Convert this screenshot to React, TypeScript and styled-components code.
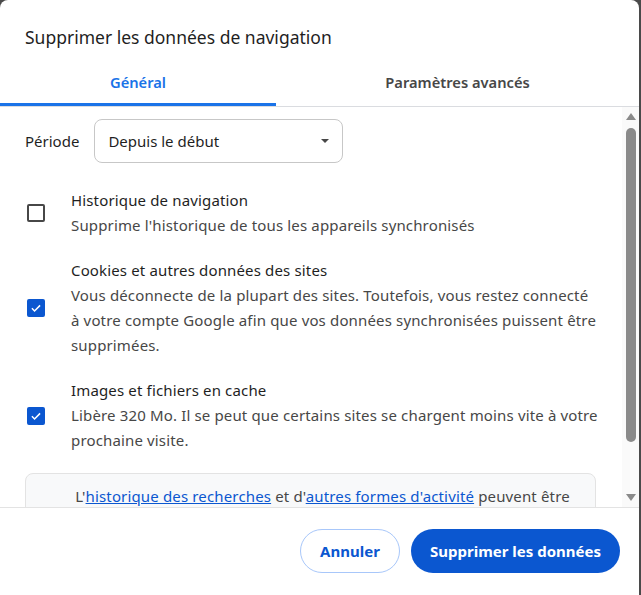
import React from "react";
import styled, { createGlobalStyle } from "styled-components";

const GlobalStyle = createGlobalStyle`
  html, body {
    margin: 0;
    padding: 0;
    background: #4a4a4a;
  }
  body {
    font-family: "Noto Sans", "Open Sans", sans-serif;
  }
`;

type Item = {
  title: string;
  lines: string;
  checked: boolean;
};

const items: Item[] = [
  {
    title: "Historique de navigation",
    lines: "Supprime l'historique de tous les appareils synchronisés",
    checked: false,
  },
  {
    title: "Cookies et autres données des sites",
    lines:
      "Vous déconnecte de la plupart des sites. Toutefois, vous restez connecté à votre compte Google afin que vos données synchronisées puissent être supprimées.",
    checked: true,
  },
  {
    title: "Images et fichiers en cache",
    lines:
      "Libère 320 Mo. Il se peut que certains sites se chargent moins vite à votre prochaine visite.",
    checked: true,
  },
];

const App: React.FC = () => {
  return (
    <>
      <GlobalStyle />
      <Dialog>
        <Title>Supprimer les données de navigation</Title>
        <Tabs>
          <Tab $active $width="276px">Général</Tab>
          <Tab>Paramètres avancés</Tab>
        </Tabs>
        <Body>
          <Content>
            <PeriodRow>
              <PeriodLabel>Période</PeriodLabel>
              <Select>
                <span>Depuis le début</span>
                <Caret />
              </Select>
            </PeriodRow>
            {items.map((item) => (
              <CheckRow key={item.title}>
                <CheckBox $checked={item.checked}>
                  {item.checked && (
                    <svg width="14" height="14" viewBox="0 0 24 24">
                      <path
                        d="M5 12.5l4.5 4.5L19 7.5"
                        fill="none"
                        stroke="#fff"
                        strokeWidth="2.6"
                      />
                    </svg>
                  )}
                </CheckBox>
                <CheckText>
                  <ItemTitle>{item.title}</ItemTitle>
                  <ItemSub>{item.lines}</ItemSub>
                </CheckText>
              </CheckRow>
            ))}
            <InfoBox>
              L'<Link>historique des recherches</Link> et d'
              <Link>autres formes d'activité</Link> peuvent être supprimés de
              votre compte Google à tout moment.
            </InfoBox>
          </Content>
          <ScrollBar>
            <Arrow $dir="up" />
            <Thumb />
            <Arrow $dir="down" />
          </ScrollBar>
        </Body>
        <Footer>
          <OutlineButton>Annuler</OutlineButton>
          <PrimaryButton>Supprimer les données</PrimaryButton>
        </Footer>
      </Dialog>
    </>
  );
};

export default App;

const Dialog = styled.div`
  width: 639px;
  height: 595px;
  background: #ffffff;
  border-radius: 8px 8px 0 0;
  display: flex;
  flex-direction: column;
  overflow: hidden;
  color: #1f1f1f;
`;

const Title = styled.div`
  padding: 24px 25px 0;
  height: 34px;
  font-size: 17.5px;
  line-height: 26px;
  color: #1f1f1f;
`;

const Tabs = styled.div`
  display: flex;
  height: 48px;
  border-bottom: 1px solid #dadce0;
`;

const Tab = styled.div<{ $active?: boolean; $width?: string }>`
  width: ${(p) => p.$width || "auto"};
  flex: ${(p) => (p.$width ? "none" : "1")};
  display: flex;
  align-items: center;
  justify-content: center;
  font-size: 14.7px;
  font-weight: 600;
  color: ${(p) => (p.$active ? "#1a73e8" : "#474747")};
  box-sizing: border-box;
  border-bottom: 3px solid ${(p) => (p.$active ? "#1a73e8" : "transparent")};
  padding-top: 3px;
`;

const Body = styled.div`
  display: flex;
  height: 400px;
  overflow: hidden;
`;

const Content = styled.div`
  flex: 1;
  min-width: 0;
  padding: 12px 24px 0 25px;
  display: flex;
  flex-direction: column;
  gap: 20px;
  font-size: 15px;
  letter-spacing: 0.15px;
`;

const PeriodRow = styled.div`
  display: flex;
  align-items: center;
  gap: 15px;
  margin-bottom: 5px;
`;

const PeriodLabel = styled.span`
  color: #1f1f1f;
  letter-spacing: 0;
`;

const Select = styled.div`
  width: 249px;
  height: 44px;
  box-sizing: border-box;
  border: 1px solid #c7c7c7;
  border-radius: 8px;
  display: flex;
  align-items: center;
  justify-content: space-between;
  padding: 0 13px;
  color: #1f1f1f;
  letter-spacing: 0;
`;

const Caret = styled.span`
  width: 0;
  height: 0;
  border-left: 4px solid transparent;
  border-right: 4px solid transparent;
  border-top: 4px solid #474747;
`;

const CheckRow = styled.div`
  display: flex;
  align-items: center;
  gap: 26px;
`;

const CheckBox = styled.div<{ $checked: boolean }>`
  flex: none;
  width: 18px;
  height: 18px;
  margin-left: 2px;
  box-sizing: border-box;
  border-radius: 2px;
  border: 2px solid ${(p) => (p.$checked ? "#0b57d0" : "#474747")};
  background: ${(p) => (p.$checked ? "#0b57d0" : "transparent")};
  display: flex;
  align-items: center;
  justify-content: center;
`;

const CheckText = styled.div`
  flex: 1;
  min-width: 0;
  display: flex;
  flex-direction: column;
  line-height: 25px;
`;

const ItemTitle = styled.span`
  color: #1f1f1f;
`;

const ItemSub = styled.span`
  color: #474747;
`;

const InfoBox = styled.div`
  margin-right: 2px;
  background: #f8f9fa;
  border: 1px solid #e3e3e3;
  border-radius: 8px;
  padding: 10px 16px 11px 40px;
  line-height: 25px;
  color: #474747;
  text-align: center;
`;

const Link = styled.a`
  color: #0b57d0;
  text-decoration: underline;
`;

const ScrollBar = styled.div`
  width: 17px;
  flex: none;
  background: #fafafa;
  display: flex;
  flex-direction: column;
  align-items: center;
  padding: 6px 0;
  box-sizing: border-box;
`;

const Arrow = styled.span<{ $dir: "up" | "down" }>`
  width: 0;
  height: 0;
  border-left: 5px solid transparent;
  border-right: 5px solid transparent;
  ${(p) =>
    p.$dir === "up"
      ? "border-bottom: 7px solid #8a8a8a;"
      : "border-top: 7px solid #8a8a8a;"}
`;

const Thumb = styled.div`
  width: 10px;
  flex: 1;
  margin: 8px 0 52px;
  background: #8a8a8a;
  border-radius: 5px;
`;

const Footer = styled.div`
  flex: 1;
  border-top: 1px solid #e3e3e3;
  display: flex;
  justify-content: flex-end;
  align-items: flex-start;
  gap: 11px;
  padding: 21px 19px 0 0;
`;

const ButtonBase = styled.button`
  height: 44px;
  border-radius: 22px;
  font-family: "Noto Sans", sans-serif;
  font-size: 15px;
  font-weight: 700;
  padding: 0 16px;
  cursor: pointer;
`;

const OutlineButton = styled(ButtonBase)`
  background: #ffffff;
  color: #0b57d0;
  border: 1px solid #a8c7fa;
  width: 100px;
`;

const PrimaryButton = styled(ButtonBase)`
  background: #0b57d0;
  color: #ffffff;
  border: none;
  width: 209px;
`;
